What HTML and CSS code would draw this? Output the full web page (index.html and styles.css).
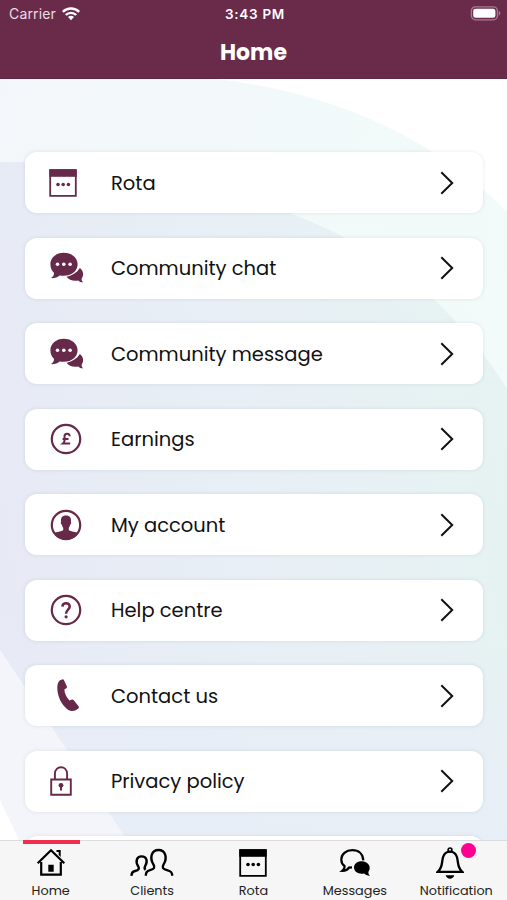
FILE: index.html
```html
<!DOCTYPE html>
<html lang="en">
<head>
<meta charset="utf-8">
<title>Home</title>
<link rel="stylesheet" href="styles.css">
</head>
<body>
<svg class="defs" width="0" height="0" aria-hidden="true">
  <symbol id="calendar" viewBox="0 0 28 28">
    <path d="M1.200 1.200h25.600v25.600H1.200z" fill="none" stroke="currentColor" stroke-width="1.800"/>
    <path d="M.3.3h27.400v7.500H.3z"/>
    <circle cx="9" cy="15.500" r="1.800"/><circle cx="14.200" cy="15.500" r="1.800"/><circle cx="19.400" cy="15.500" r="1.800"/>
  </symbol>
  <symbol id="chat" viewBox="0 0 34 32">
    <path d="M13.800.8C6.200.8.4 5.700.4 12.200c0 4 1.500 6.500 3.600 8.500.2 2.200-.9 3.900-3 5.400 3.400.3 6.200-.7 8.600-2.700 10.500 2 18-3.800 18-11.200C27.600 5.700 21.400.8 13.800.8z"/>
    <path d="M29.900 16c-3 4.600-7.300 7.500-13.300 8.700 2.300 3.100 6.400 4.600 11.600 3.700 1.300 1.400 2.900 2 5 1.900-1.200-1-1.700-2.300-1.500-3.900 2.200-2.900 2.100-7.100-1.800-10.400z"/>
    <g fill="#fff"><circle cx="7.500" cy="12.300" r="1.800"/><circle cx="13.800" cy="12.300" r="1.800"/><circle cx="20.100" cy="12.300" r="1.800"/></g>
  </symbol>
  <symbol id="chevron" viewBox="0 0 14 24">
    <path d="M1.300 1.300 12.200 12 1.300 22.700" fill="none" stroke="currentColor" stroke-width="2"/>
  </symbol>
</svg>
<div class="app">
  <header class="header">
    <div class="status">
      <div class="carrier"><span>Carrier</span>
        <svg width="18" height="14" viewBox="0 0 18 14" fill="none" stroke="#fff" stroke-width="2.400"><path d="M.8 4.800c4.600-4.500 11.800-4.500 16.400 0M3.800 8c2.900-2.900 7.500-2.900 10.400 0"/><path d="M6 10c1.700-1.600 4.300-1.600 6 0l-3 3.300z" fill="#fff" stroke="none"/></svg>
      </div>
      <span class="clock">3:43 PM</span>
      <svg class="battery" width="31" height="15" viewBox="0 0 31 15"><rect x="1.400" y=".9" width="26" height="12.900" rx="4" fill="none" stroke="#a47c91" stroke-width="1.300"/><rect x="3.200" y="2.800" width="22.200" height="9" rx="2.300" fill="#fff"/><path d="M28.800 5v4.600c2-.7 2-3.900 0-4.600z" fill="#a47c91"/></svg>
    </div>
    <h1 class="title">Home</h1>
  </header>
  <main class="content">
    <svg class="backdrop" viewBox="0 79 507 761" preserveAspectRatio="none" aria-hidden="true">
      <defs>
        <linearGradient id="pale" x1="0" y1="0" x2="1" y2=".4"><stop offset="0" stop-color="#f3f7fb"/><stop offset="1" stop-color="#f2fbf9"/></linearGradient>
        <linearGradient id="main" x1="0" y1=".5" x2="1" y2=".3"><stop offset="0" stop-color="#e7eaf5"/><stop offset=".5" stop-color="#e8eff5"/><stop offset="1" stop-color="#e6f3f2"/></linearGradient>
        <linearGradient id="low" x1="0" y1="0" x2="0" y2="1"><stop offset=".5" stop-color="#e8eef7" stop-opacity="0"/><stop offset="1" stop-color="#e8eef7"/></linearGradient>
      </defs>
      <path d="M0 79H215C335 92 437 140 507 212V840H0z" fill="url(#pale)"/>
      <path d="M0 162H110C190 170 245 192 290 213C380 248 450 298 507 389V840H127L0 650z" fill="url(#main)"/>
      <path d="M507 389V840H127L0 650V389z" fill="url(#low)"/>
      <path d="M0 650 127 840H0z" fill="#f4f5fa"/>
      <path d="M0 800 19 840H0z" fill="#fff"/>
    </svg>
    <nav class="menu">
      <a class="card"><svg class="icon calendar"><use href="#calendar"/></svg><span class="label">Rota</span><svg class="chevron"><use href="#chevron"/></svg></a>
      <a class="card"><svg class="icon chat"><use href="#chat"/></svg><span class="label">Community chat</span><svg class="chevron"><use href="#chevron"/></svg></a>
      <a class="card"><svg class="icon chat"><use href="#chat"/></svg><span class="label">Community message</span><svg class="chevron"><use href="#chevron"/></svg></a>
      <a class="card"><svg class="icon round" viewBox="0 0 32 32"><circle cx="16" cy="16" r="14.200" fill="none" stroke="currentColor" stroke-width="2.200"/><path d="M19.700 13.200c-.2-3.200-5.200-3.300-5.200.2 0 2.600 1.100 5.200-1.500 7.100h7.200M12.600 16h5.900" fill="none" stroke="currentColor" stroke-width="2"/></svg><span class="label">Earnings</span><svg class="chevron"><use href="#chevron"/></svg></a>
      <a class="card"><svg class="icon round" viewBox="0 0 32 32"><circle cx="16" cy="16" r="14.200" fill="none" stroke="currentColor" stroke-width="2.200"/><path d="M16 6.500c-4 0-5.600 2.700-4.900 6.300-.7.600-.2 2.500.8 3 .3 1.500.8 2.500 1.300 3.200v2.200c-2 1.400-6.600 1.400-9.500 2.700C6.400 28.300 11 30.500 16 30.500s9.600-2.200 12.300-6.600c-2.900-1.300-7.500-1.300-9.500-2.700V19c.5-.7 1-1.700 1.300-3.200 1-.5 1.500-2.400.8-3 .7-3.600-.9-6.300-4.900-6.300z"/></svg><span class="label">My account</span><svg class="chevron"><use href="#chevron"/></svg></a>
      <a class="card"><svg class="icon round" viewBox="0 0 32 32"><circle cx="16" cy="16" r="14.200" fill="none" stroke="currentColor" stroke-width="2.200"/><path d="M12.400 12.600c.1-2.200 1.500-3.400 3.600-3.400 2.200 0 3.700 1.200 3.700 3.300 0 3.100-3.600 3.200-3.600 7.200" fill="none" stroke="currentColor" stroke-width="2.500"/><circle cx="16.100" cy="22.800" r="1.600"/></svg><span class="label">Help centre</span><svg class="chevron"><use href="#chevron"/></svg></a>
      <a class="card"><svg class="icon phone" viewBox="0 0 22 33"><path d="M3 1.300 5.200.4c.8-.3 1.400 0 1.700.7L9.800 7.300c.4 1 .1 1.800-.8 2.300l-1.700 1c.4 4.300 2.200 7.900 5.200 11l1.900-.9c.9-.5 1.700-.3 2.400.5l4.700 6.100c.6.900.5 1.700-.3 2.300-2.800 2.700-7.400 3.300-11.200.3C4.500 25.500.3 17.500.3 8.800.3 5.200 1.200 2.600 3 1.300z"/></svg><span class="label">Contact us</span><svg class="chevron"><use href="#chevron"/></svg></a>
      <a class="card"><svg class="icon lock" viewBox="0 0 22 30"><g fill="none" stroke="currentColor" stroke-width="1.900"><path d="M1.200 13.500h19.600v15.200H1.200z"/><path d="M4.900 13.500V7.800c0-8.700 12.200-8.700 12.200 0v5.700"/></g><circle cx="11" cy="19.300" r="2.400"/><path d="M10 20h2v4.500h-2z"/></svg><span class="label">Privacy policy</span><svg class="chevron"><use href="#chevron"/></svg></a>
      <a class="card"></a>
    </nav>
  </main>
  <nav class="tabs">
    <a class="tab active"><svg width="30" height="30" viewBox="0 0 30 30"><path d="M1.700 15.300 15 2.300l13.300 13M5.200 14v12.700h19.600V14" fill="none" stroke="currentColor" stroke-width="2.200"/><path d="M20.500 2h4.200v7l-2-1.900V4.100h-2.200zM12.300 16.800h5.400v7h-5.400z"/></svg><span>Home</span></a>
    <a class="tab"><svg width="44" height="30" viewBox="0 0 44 30" fill="none" stroke="currentColor" stroke-width="2.400"><path d="M1.600 27.800c-.2-3 .7-4.200 3.500-4.800 3.800-.9 4.500-2.300 3-4.800-2.800-4.500-1.700-9.800 3.500-9.800 5.300 0 6.300 5.100 3.600 9.600-1 1.800-.9 2.800.4 3.700"/><path d="M15.800 27.800c-.2-3.600 1-5 4.300-5.700 4.400-1 5-2.700 3.300-5.800-3.900-6.300-2.200-14.300 5.100-14.300s9 8 5.100 14.300c-1.700 3.100-1.100 4.800 3.300 5.800 4 .9 5.500 2.100 5.300 5.700"/></svg><span>Clients</span></a>
    <a class="tab"><svg width="28" height="28"><use href="#calendar"/></svg><span>Rota</span></a>
    <a class="tab"><svg width="32" height="30" viewBox="0 0 32 30"><path d="M24.300 12.400C24 5.500 19.500 2.200 13.300 2.200 7 2.200 2.300 6 2.300 11.500c0 3 1.300 5.200 3.200 6.500.3 2-.5 3.500-2.200 4.800 3.200.1 5.300-1 6.700-3.200l3-.2" fill="none" stroke="currentColor" stroke-width="2.200"/><path d="M22.800 13.300c-4.600 0-7.800 2.700-7.800 6.300 0 4.600 5.200 7.100 10.200 5.900 1.500 1.500 3.500 2.400 5.800 2.200-1.500-1-1.800-2.200-1.500-3.900 3.400-5.200-.8-10.500-6.700-10.500z"/></svg><span>Messages</span></a>
    <a class="tab"><svg class="bell" width="28" height="33" viewBox="0 0 28 33"><path d="M1.800 25.800c5-4.400 3.700-9 5.200-14.500C8.100 7.300 10.300 5.600 14 5.600s5.900 1.700 7 5.700c1.500 5.500.2 10.100 5.200 14.500z" fill="none" stroke="currentColor" stroke-width="2.300"/><circle cx="14" cy="3.900" r="1.900" fill="none" stroke="currentColor" stroke-width="1.700"/><path d="M9.700 29.200h8.600c-1 4.600-7.600 4.600-8.600 0z"/></svg><i class="dot"></i><span>Notification</span></a>
  </nav>
</div>
</body>
</html>
```
FILE: styles.css
```css
* { box-sizing: border-box; }
body { margin: 0; font-family: Poppins, Inter, "Liberation Sans", sans-serif; color: #111; }
.defs { position: absolute; }
.app { width: 507px; height: 900px; display: flex; flex-direction: column; overflow: hidden; background: #fff; }

.header { height: 79px; flex: none; background: #6a2b4b; border-bottom: 1px solid #5d2944; color: #fff; }
.status { height: 27px; padding: 0 6px 0 9px; display: grid; grid-template-columns: 1fr auto 1fr; align-items: center; font-family: Inter, sans-serif; font-size: 14px; }
.carrier { display: flex; align-items: center; gap: 6px; color: #eadde4; letter-spacing: .15px; }
.clock { font-weight: 600; font-size: 13.500px; letter-spacing: .7px; }
.battery { justify-self: end; }
.title { margin: 0; height: 52px; line-height: 52px; font-size: 22px; font-weight: 700; text-align: center; }

.content { position: relative; flex: 1; min-height: 0; overflow: hidden; }
.backdrop { position: absolute; inset: 0; width: 100%; height: 100%; }
.menu { position: relative; padding: 73px 24px 0 25px; display: flex; flex-direction: column; gap: 24.500px; }
.card { height: 61px; flex: none; padding: 0 29px 0 24px; display: grid; grid-template-columns: 62px 1fr 14px; align-items: center; background: #fff; border-radius: 12px; box-shadow: 0 0 4px rgba(50, 70, 90, .12); color: #111; }
.icon { color: #66294a; fill: currentColor; }
.calendar { width: 28px; height: 28px; }
.chat { width: 34px; height: 32px; margin-left: 1px; }
.round { width: 32px; height: 32px; margin-left: .5px; }
.phone { width: 22px; height: 33px; margin-left: 7.500px; }
.lock { width: 22px; height: 30px; margin-left: 1px; }
.label { font-size: 19.500px; white-space: nowrap; padding-top: 1px; }
.chevron { width: 14px; height: 24px; color: #111; }

.tabs { height: 60px; flex: none; display: grid; grid-template-columns: repeat(5, 1fr); background: #f6f6f7; border-top: 1px solid #dcdce0; }
.tab { position: relative; display: grid; grid-template-rows: 43px 14px; justify-items: center; align-items: center; font-size: 12.800px; line-height: 14px; color: #000; fill: currentColor; white-space: nowrap; }
.tab span { color: #222; }
.active::before { content: ""; position: absolute; top: -1px; left: 23px; width: 57px; height: 4px; background: #ee2f52; }
.bell { margin-right: 13px; }
.dot { position: absolute; top: 2px; left: 55px; width: 15px; height: 15px; border-radius: 50%; background: #ff0090; }
```
